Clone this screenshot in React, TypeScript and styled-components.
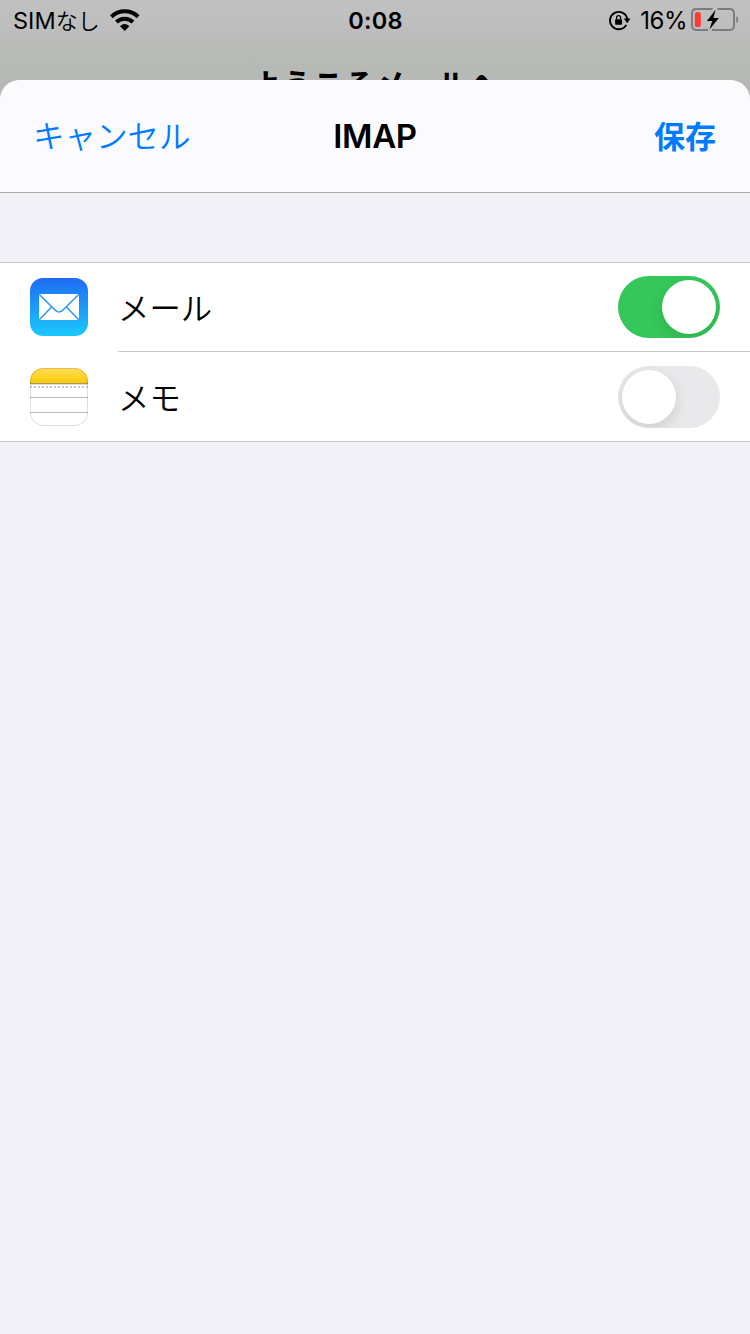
import React, { useState } from "react";
import styled, { createGlobalStyle } from "styled-components";

const GlobalStyle = createGlobalStyle`
  * { box-sizing: border-box; }
  body {
    margin: 0;
    font-family: Inter, "Noto Sans CJK JP", sans-serif;
    color: #000;
  }
`;

const Screen = styled.div`
  display: flex;
  flex-direction: column;
  width: 750px;
  height: 1334px;
  overflow: hidden;
  background: linear-gradient(#c1c1c2 0, #b9bbb8 50px, #b4b7b3 100px);
`;

const StatusBar = styled.div`
  display: grid;
  grid-template-columns: 1fr auto 1fr;
  grid-template-rows: 40px;
  align-items: center;
  height: 40px;
  flex: none;
  padding: 0 12px 0 13px;
  font-size: 24px;
  line-height: 38px;
`;

const StatusGroup = styled.div<{ $end?: boolean }>`
  display: flex;
  align-items: center;
  height: 40px;
  justify-content: ${(p) => (p.$end ? "flex-end" : "flex-start")};
`;

const Carrier = styled.span`
  display: flex;
  align-items: flex-start;
  width: 97px;
  padding-top: 2px;
  font-size: 23.5px;
  white-space: nowrap;
`;

const Kana = styled.span`
  font-family: "Noto Sans CJK JP", sans-serif;
  font-weight: 350;
  font-size: 22px;
  line-height: 34px;
`;

const Clock = styled.span`
  padding-top: 2px;
  font-size: 23.5px;
  font-weight: 600;
  letter-spacing: 0.3px;
`;

const Percent = styled.span`
  margin: 0 3px 0 9px;
  padding-top: 2px;
  font-size: 24px;
  letter-spacing: -0.5px;
`;

const BackTitle = styled.div`
  height: 40px;
  flex: none;
  overflow: hidden;
  padding-top: 20px;
  text-align: center;
  font-family: "Noto Sans CJK JP", sans-serif;
  font-weight: 700;
  font-size: 31.2px;
  line-height: 46px;
`;

const Sheet = styled.main`
  flex: 1;
  overflow: hidden;
  border-radius: 20px 20px 0 0;
  background: #f2f1f7;
`;

const NavBar = styled.header`
  display: grid;
  grid-template-columns: 1fr auto 1fr;
  align-items: center;
  height: 113px;
  padding: 0 33px;
  background: #fbfbfd;
  border-bottom: 1px solid #a9a9ae;
`;

const NavTitle = styled.h1`
  margin: 0;
  font-size: 33px;
  font-weight: 600;
  letter-spacing: -0.4px;
`;

const NavButton = styled.button<{ $strong?: boolean }>`
  justify-self: ${(p) => (p.$strong ? "end" : "start")};
  padding: ${(p) => (p.$strong ? "0 1px 2px 0" : "0 0 4px")};
  border: 0;
  background: none;
  color: #007aff;
  font-family: "Noto Sans CJK JP", sans-serif;
  font-size: ${(p) => (p.$strong ? "31px" : "31.5px")};
  font-weight: ${(p) => (p.$strong ? 700 : 350)};
  line-height: 46px;
`;

const List = styled.section`
  margin-top: 69px;
  background: #fff;
  border-top: 1px solid #c6c6c9;
  border-bottom: 1px solid #c6c6c9;
`;

const Row = styled.div`
  display: flex;
  height: 89px;
  padding-left: 30px;
`;

const RowIcon = styled.div<{ $divided?: boolean }>`
  display: flex;
  align-items: center;
  width: 88px;
  flex: none;
  padding-bottom: ${(p) => (p.$divided ? "1px" : "0")};
`;

const RowBody = styled.div<{ $divided?: boolean }>`
  display: flex;
  flex: 1;
  align-items: center;
  justify-content: space-between;
  padding-right: 30px;
  border-bottom: ${(p) => (p.$divided ? "1px solid #c6c6c9" : "0")};
`;

const Label = styled.span`
  font-family: "Noto Sans CJK JP", sans-serif;
  font-size: 31.4px;
  font-weight: 350;
  line-height: 46px;
`;

const Track = styled.button<{ $on: boolean }>`
  display: flex;
  align-items: center;
  justify-content: ${(p) => (p.$on ? "flex-end" : "flex-start")};
  width: 102px;
  height: 62px;
  padding: 0 4px;
  border: 0;
  border-radius: 31px;
  overflow: hidden;
  background: ${(p) => (p.$on ? "#35c759" : "#e9e9eb")};
`;

const Knob = styled.span`
  width: 54px;
  height: 54px;
  border-radius: 50%;
  background: #fff;
  box-shadow: 0 5px 14px rgba(0, 0, 0, 0.12);
`;

const WifiIcon = () => (
  <svg width="30" height="22" viewBox="0 0 30 22">
    <g fill="none" stroke="#000" strokeWidth="4">
      <path d="M1.300 7.700A19.500 19.500 0 0 1 28.100 7.700" />
      <path d="M6.400 13A12 12 0 0 1 23 13" />
    </g>
    <path d="M10 17.300q4.700-4.400 9.400 0L14.700 22Z" />
  </svg>
);

const LockIcon = () => (
  <svg width="22" height="22" viewBox="0 0 22 22">
    <path d="M16.900 16.500A8.700 8.700 0 1 1 18.300 10.200" fill="none" stroke="#000" strokeWidth="1.900" strokeLinecap="round" />
    <path d="M14.800 9.600h6.800l-3.400 4.700Z" />
    <rect x="6.100" y="10.200" width="7" height="5.600" rx=".8" />
    <path d="M7.600 10.600v-2a2 2 0 0 1 4 0v2" fill="none" stroke="#000" strokeWidth="1.300" />
  </svg>
);

const BatteryIcon = () => (
  <svg width="48" height="26" viewBox="0 0 48 26">
    <path d="M22.500 2H6.500Q2 2 2 6.500v12q0 4.500 4.500 4.500h11.500M27.500 2h12q4.500 0 4.500 4.500v12q0 4.500-4.500 4.500H22" fill="none" stroke="#7b7c7b" strokeWidth="1.900" />
    <path d="M46.300 9q2 1 2 3.500t-2 3.500Z" fill="#7b7c7b" />
    <rect x="4.800" y="5" width="6" height="15" rx="2.600" fill="#ff3b30" />
    <path d="M25.600 2.800 16.900 14h5.300l-2.700 8.500L28.900 11h-5.500Z" />
  </svg>
);

const MailIcon = () => (
  <svg width="58" height="58" viewBox="0 0 58 58">
    <defs>
      <linearGradient id="mail" x2="0" y2="1">
        <stop stopColor="#1e6cf2" />
        <stop offset="1" stopColor="#1bc9fd" />
      </linearGradient>
    </defs>
    <rect width="58" height="58" rx="13" fill="url(#mail)" />
    <rect x="9" y="16" width="40" height="26" rx="1" fill="#fff" />
    <path d="M9.300 16.400 24.500 31.500q4.500 5.200 9 0L48.700 16.400M9.300 41.700 21.300 29.200M48.700 41.700 36.700 29.200" fill="none" stroke="#2992f5" strokeWidth="1.400" />
  </svg>
);

const NotesIcon = () => (
  <svg width="58" height="58" viewBox="0 0 58 58">
    <defs>
      <linearGradient id="notes" x2="0" y2="1">
        <stop stopColor="#ffdc5b" />
        <stop offset="1" stopColor="#fdca05" />
      </linearGradient>
      <clipPath id="notesClip">
        <rect width="58" height="58" rx="13" />
      </clipPath>
    </defs>
    <g clipPath="url(#notesClip)">
      <rect width="58" height="58" fill="#fff" />
      <rect width="58" height="15" fill="url(#notes)" />
      <path d="M0 15.500h58" stroke="#a8995c" />
      <path d="M0 16.500h58" stroke="#dedede" />
      <path d="M0 19h58" stroke="#c9c9c9" strokeWidth="2" strokeDasharray="2 2" />
      <path d="M0 29.500h58M0 44.500h58" stroke="#bcbcbc" />
    </g>
    <rect x=".5" y=".5" width="57" height="57" rx="12.500" fill="none" stroke="#000" strokeOpacity=".13" />
  </svg>
);

type SwitchRowProps = {
  icon: React.ReactNode;
  label: string;
  initial: boolean;
  divided?: boolean;
};

function SwitchRow({ icon, label, initial, divided }: SwitchRowProps) {
  const [on, setOn] = useState(initial);
  return (
    <Row>
      <RowIcon $divided={divided}>{icon}</RowIcon>
      <RowBody $divided={divided}>
        <Label>{label}</Label>
        <Track $on={on} role="switch" aria-checked={on} aria-label={label} onClick={() => setOn(!on)}>
          <Knob />
        </Track>
      </RowBody>
    </Row>
  );
}

export default function App() {
  return (
    <Screen>
      <GlobalStyle />
      <StatusBar>
        <StatusGroup>
          <Carrier>SIM<Kana>なし</Kana></Carrier>
          <WifiIcon />
        </StatusGroup>
        <Clock>0:08</Clock>
        <StatusGroup $end>
          <LockIcon />
          <Percent>16%</Percent>
          <BatteryIcon />
        </StatusGroup>
      </StatusBar>
      <BackTitle>ようこそメールへ</BackTitle>
      <Sheet>
        <NavBar>
          <NavButton>キャンセル</NavButton>
          <NavTitle>IMAP</NavTitle>
          <NavButton $strong>保存</NavButton>
        </NavBar>
        <List>
          <SwitchRow icon={<MailIcon />} label="メール" initial divided />
          <SwitchRow icon={<NotesIcon />} label="メモ" initial={false} />
        </List>
      </Sheet>
    </Screen>
  );
}
